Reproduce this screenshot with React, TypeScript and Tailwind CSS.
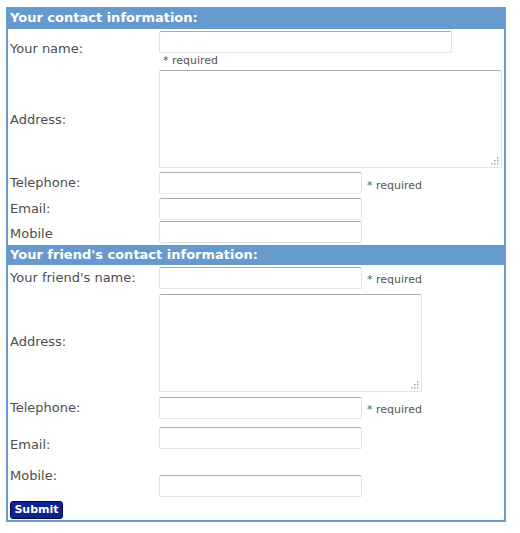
const font = { fontFamily: '"DejaVu Sans", Verdana, sans-serif' };

function TextInput({ w = "w-[203px]" }: { w?: string }) {
  return (
    <input
      type="text"
      className={`${w} h-[22px] rounded-[2px] border border-[#e2e3ea] border-t-[#abadb3] bg-white px-1 text-[13px] outline-none`}
    />
  );
}

// dotted resize grip, drawn over the bottom-right corner of the textarea
function Grip() {
  const dots = [
    [7, 1],
    [4, 4],
    [7, 4],
    [1, 7],
    [4, 7],
    [7, 7],
  ];
  return (
    <svg width="9" height="9" className="pointer-events-none absolute bottom-[3px] right-[3px]">
      {dots.map(([x, y]) => (
        <rect key={`${x}-${y}`} x={x} y={y} width="1.5" height="1.5" fill="#a6a6a6" />
      ))}
    </svg>
  );
}

function Area({ w }: { w: string }) {
  return (
    <div className="relative">
      <textarea
        className={`${w} block h-[98px] resize-none rounded-[2px] border border-[#e2e3ea] border-t-[#abadb3] bg-white text-[13px] outline-none`}
      />
      <Grip />
    </div>
  );
}

function Required() {
  return <span className="text-[11px] text-[#555]">* required</span>;
}

function Header({ title, h }: { title: string; h: string }) {
  return (
    <div className={`${h} flex items-center bg-[#6699cc] px-1 text-[13px] font-bold text-white`}>
      {title}
    </div>
  );
}

export default function App() {
  return (
    <div className="bg-white h-[533px] pl-[6px] pt-[7px]" style={font}>
      <form className="w-[500px] border-x-2 border-b-2 border-[#6699cc] text-[13px] text-[#4d4d4d]">
        <Header title="Your contact information:" h="h-[22px] -mx-[2px]" />
        <div className="px-[2px]">
          {/* your details */}
          <div className="flex h-[40px] items-center">
            <label className="w-[149px] shrink-0">Your name:</label>
            <div className="flex flex-col self-start pt-[2px]">
              <TextInput w="w-[293px]" />
              <span className="pl-1 leading-[14px]">
                <Required />
              </span>
            </div>
          </div>
          <div className="flex h-[101px] items-center">
            <label className="w-[149px] shrink-0">Address:</label>
            <div className="self-start pt-[1px]">
              <Area w="w-[343px]" />
            </div>
          </div>
          <div className="flex h-[26px] items-center">
            <label className="w-[149px] shrink-0">Telephone:</label>
            <TextInput />
            <span className="ml-[5px] pt-[3px]">
              <Required />
            </span>
          </div>
          <div className="flex h-[25px] items-center">
            <label className="w-[149px] shrink-0">Email:</label>
            <TextInput />
          </div>
          <div className="flex h-[22px] items-center">
            <label className="w-[149px] shrink-0 pt-[3px]">Mobile</label>
            <TextInput />
          </div>
        </div>
        <div className="pt-[2px]">
          <Header title="Your friend's contact information:" h="h-[20px] -mx-[2px]" />
        </div>
        <div className="px-[2px]">
          {/* friend's details */}
          <div className="flex h-[25px] items-center">
            <label className="w-[149px] shrink-0">Your friend's name:</label>
            <TextInput />
            <span className="ml-[5px] pt-[3px]">
              <Required />
            </span>
          </div>
          <div className="flex h-[104px] items-center">
            <label className="w-[149px] shrink-0">Address:</label>
            <div className="self-start pt-[4px]">
              <Area w="w-[263px]" />
            </div>
          </div>
          <div className="flex h-[27px] items-center">
            <label className="w-[149px] shrink-0">Telephone:</label>
            <TextInput />
            <span className="ml-[5px] pt-[3px]">
              <Required />
            </span>
          </div>
          <div className="flex h-[44px] items-start">
            <label className="w-[149px] shrink-0 pt-[14px]">Email:</label>
            <div className="pt-[6px]">
              <TextInput />
            </div>
          </div>
          <div className="flex h-[34px] items-start">
            <label className="w-[149px] shrink-0 pt-[1px]">Mobile:</label>
            <div className="pt-[10px]">
              <TextInput />
            </div>
          </div>
          <div className="pb-[1px]">
            <button
              type="button"
              className="h-[18px] w-[53px] rounded-[3px] border border-[#00004a] bg-[#0a2490] text-[11px] font-bold leading-none text-white"
            >
              Submit
            </button>
          </div>
        </div>
      </form>
    </div>
  );
}
